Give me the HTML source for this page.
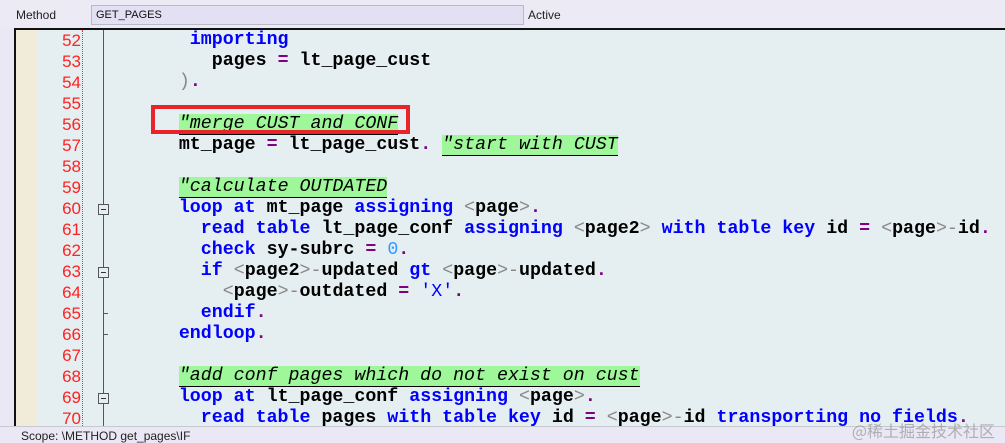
<!DOCTYPE html>
<html><head><meta charset="utf-8"><style>
*{margin:0;padding:0;box-sizing:border-box}
body{width:1005px;height:443px;overflow:hidden;background:#e9e8f4;font-family:"Liberation Sans",sans-serif;position:relative}
.top{position:absolute;left:0;top:0;width:1005px;height:28px;background:#ebeaf5}
.lbl{position:absolute;font-size:12px;color:#222;top:8px}
.inp{position:absolute;left:91px;top:5px;width:433px;height:20px;background:#e2e0f2;border:1px solid #b9b8c8;font-size:11px;font-family:"Liberation Sans",sans-serif;padding:3px 4px;color:#111}
.ed{position:absolute;left:14px;top:28px;width:991px;height:398px;background:#e5eef0;border-left:2px solid #111;border-top:2px solid #111;overflow:hidden}
.beige{position:absolute;left:0;top:0;width:21px;height:100%;background:#f1ebd9}
.nums{position:absolute;left:21px;top:0;width:46px;height:100%;border-right:1px dotted #e33}
.fline{position:absolute;left:87px;top:0;width:1px;height:100%;background:#555}
.ln{position:absolute;left:0;width:44px;text-align:right;color:#f22;font-family:"Liberation Sans",sans-serif;font-size:17px;line-height:21px}
.fb{position:absolute;left:82px;width:11px;height:11px;border:1px solid #555;background:#e5eef0}
.fb:after{content:"";position:absolute;left:2px;top:4px;width:5px;height:1px;background:#333}
.tick{position:absolute;left:87px;width:5px;height:1px;background:#555}
pre{position:absolute;left:97px;top:0;font-family:"Liberation Mono",monospace;font-size:18.3px;line-height:21px;font-weight:bold;color:#000}
.k{color:#0000ff}.o{color:#800080}.g{color:#888;font-weight:normal}.n{color:#3399ff;font-weight:normal}.s{color:#0000ff;font-weight:normal}
.c{background:#9ef89a;font-style:italic;font-weight:normal;border-bottom:1px solid #000}
.red{position:absolute;left:151px;top:105px;width:259px;height:29px;border:4px solid #e8232a}
.status{position:absolute;left:0;top:426px;width:1005px;height:17px;background:#e9e8f4;border-top:1px solid #c8c8d0}
.wm{position:absolute;right:10px;top:418px;font-family:"Noto Sans CJK SC",sans-serif;font-size:16px;color:rgba(150,150,150,.7)}
</style></head><body>
<div class="top"></div>
<div class="lbl" style="left:16px">Method</div>
<div class="inp">GET_PAGES</div>
<div class="lbl" style="left:528px">Active</div>
<div class="ed">
<div class="beige"></div>
<div class="nums">
<div class="ln" style="top:0">52</div><div class="ln" style="top:21px">53</div><div class="ln" style="top:42px">54</div><div class="ln" style="top:63px">55</div><div class="ln" style="top:84px">56</div><div class="ln" style="top:105px">57</div><div class="ln" style="top:126px">58</div><div class="ln" style="top:147px">59</div><div class="ln" style="top:168px">60</div><div class="ln" style="top:189px">61</div><div class="ln" style="top:210px">62</div><div class="ln" style="top:231px">63</div><div class="ln" style="top:252px">64</div><div class="ln" style="top:273px">65</div><div class="ln" style="top:294px">66</div><div class="ln" style="top:315px">67</div><div class="ln" style="top:336px">68</div><div class="ln" style="top:357px">69</div><div class="ln" style="top:378px">70</div>
</div>
<div class="fline"></div>
<div class="fb" style="top:174px"></div>
<div class="fb" style="top:237px"></div>
<div class="fb" style="top:363px"></div>
<div class="tick" style="top:283px"></div>
<div class="tick" style="top:304px"></div>
<pre>       <span class="k">importing</span>
         pages <span class="o">=</span> lt_page_cust
      <span class="g">)</span><span class="o">.</span>

      <span class="c">"merge CUST and CONF</span>
      mt_page <span class="o">=</span> lt_page_cust<span class="o">.</span> <span class="c">"start with CUST</span>

      <span class="c">"calculate OUTDATED</span>
      <span class="k">loop at</span> mt_page <span class="k">assigning</span> <span class="g">&lt;</span>page<span class="g">&gt;</span><span class="o">.</span>
        <span class="k">read table</span> lt_page_conf <span class="k">assigning</span> <span class="g">&lt;</span>page2<span class="g">&gt;</span> <span class="k">with table key</span> id <span class="o">=</span> <span class="g">&lt;</span>page<span class="g">&gt;-</span>id<span class="o">.</span>
        <span class="k">check</span> sy-subrc <span class="o">=</span> <span class="n">0</span><span class="o">.</span>
        <span class="k">if</span> <span class="g">&lt;</span>page2<span class="g">&gt;-</span>updated <span class="k">gt</span> <span class="g">&lt;</span>page<span class="g">&gt;-</span>updated<span class="o">.</span>
          <span class="g">&lt;</span>page<span class="g">&gt;-</span>outdated <span class="o">=</span> <span class="s">'X'</span><span class="o">.</span>
        <span class="k">endif</span><span class="o">.</span>
      <span class="k">endloop</span><span class="o">.</span>

      <span class="c">"add conf pages which do not exist on cust</span>
      <span class="k">loop at</span> lt_page_conf <span class="k">assigning</span> <span class="g">&lt;</span>page<span class="g">&gt;</span><span class="o">.</span>
        <span class="k">read table</span> pages <span class="k">with table key</span> id <span class="o">=</span> <span class="g">&lt;</span>page<span class="g">&gt;-</span>id <span class="k">transporting no fields</span><span class="o">.</span></pre>
</div>
<div class="red"></div>
<div class="status"><div class="lbl" style="left:21px;top:2px">Scope: \METHOD get_pages\IF</div></div>
<div class="wm">@稀土掘金技术社区</div>
</body></html>
